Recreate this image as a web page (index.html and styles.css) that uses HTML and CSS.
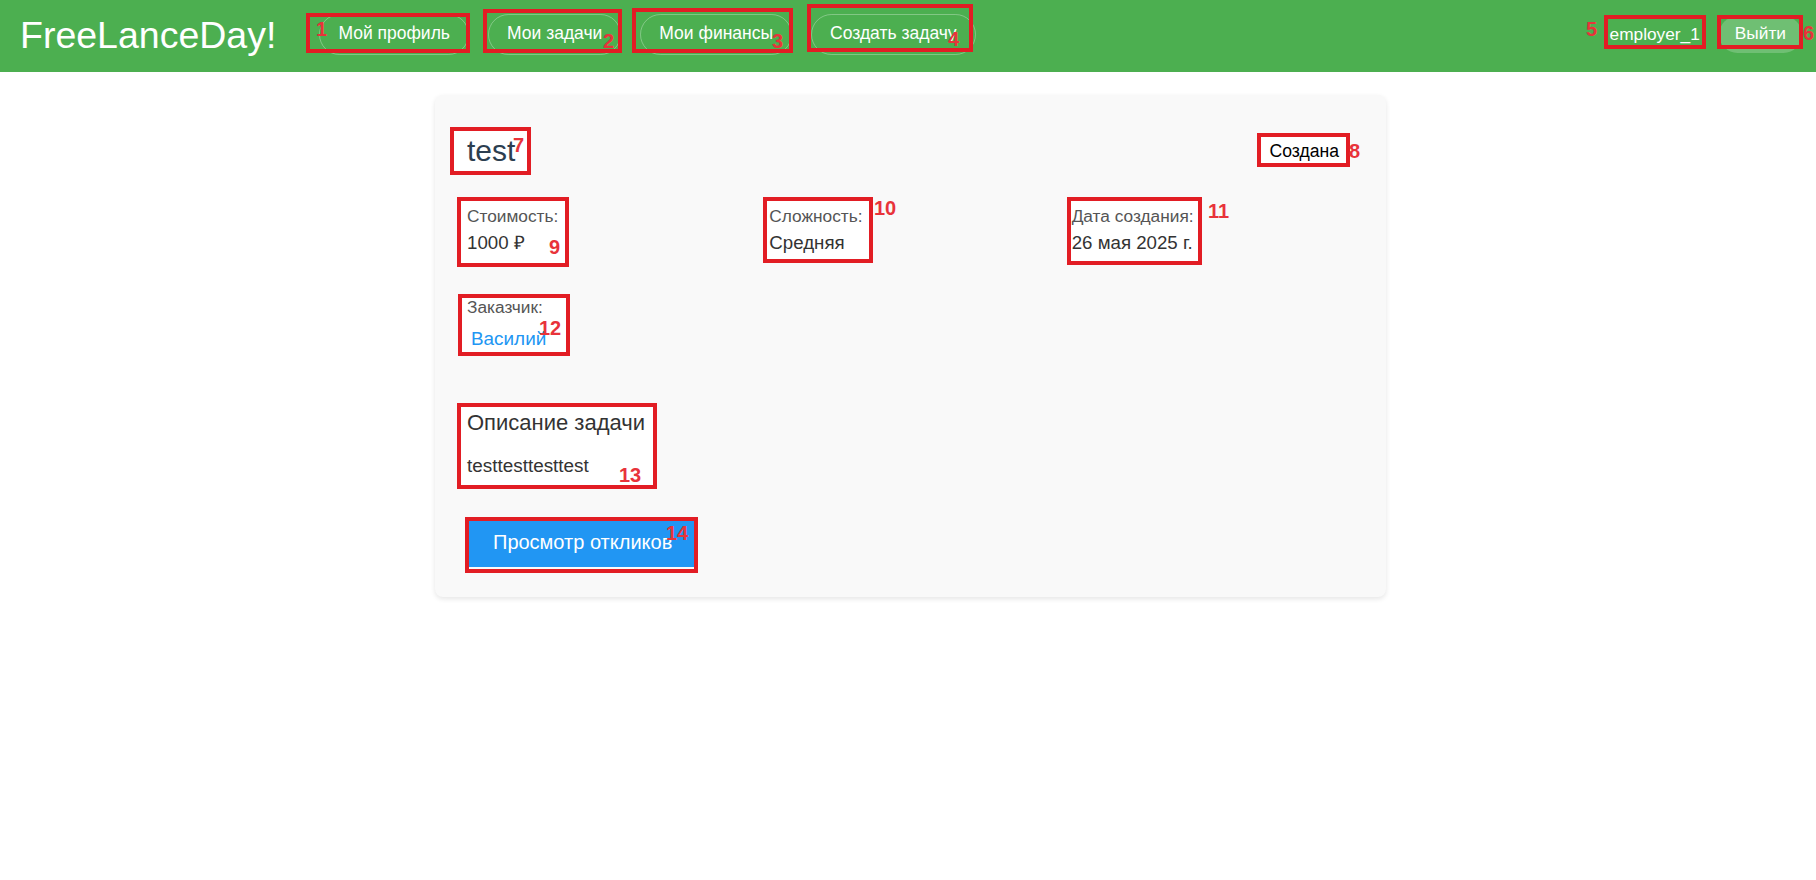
FILE: index.html
```html
<!DOCTYPE html>
<html lang="ru">
<head>
<meta charset="utf-8">
<title>FreeLanceDay! — test</title>
<link rel="stylesheet" href="styles.css">
</head>
<body>
<header class="topbar">
  <div class="logo">FreeLanceDay!</div>
  <nav class="nav">
    <a class="nav-btn">Мой профиль</a>
    <a class="nav-btn">Мои задачи</a>
    <a class="nav-btn">Мои финансы</a>
    <a class="nav-btn">Создать задачу</a>
  </nav>
  <div class="user">
    <span class="username">employer_1</span>
    <button class="logout">Выйти</button>
  </div>
</header>

<main class="page">
  <section class="card">
    <div class="card-body">
      <div class="task-head">
        <h1 class="task-title">test</h1>
        <span class="status">Создана</span>
      </div>
      <div class="details">
        <div class="detail">
          <div class="label">Стоимость:</div>
          <div class="value">1000 ₽</div>
        </div>
        <div class="detail">
          <div class="label">Сложность:</div>
          <div class="value">Средняя</div>
        </div>
        <div class="detail">
          <div class="label">Дата создания:</div>
          <div class="value">26 мая 2025 г.</div>
        </div>
        <div class="detail">
          <div class="label">Заказчик:</div>
          <a class="value link">Василий</a>
        </div>
      </div>
      <div class="desc">
        <h3 class="desc-title">Описание задачи</h3>
        <p class="desc-text">testtesttesttest</p>
      </div>
      <button class="primary">Просмотр откликов</button>
    </div>
  </section>
</main>

<div class="annotations">
  <div class="fill a7"></div>
  <div class="fill a8"></div>
  <div class="fill a9"></div>
  <div class="fill a10"></div>
  <div class="fill a11"></div>
  <div class="fill a12"></div>
  <div class="fill a13"></div>

  <div class="box a1"></div>
  <div class="box a2"></div>
  <div class="box a3"></div>
  <div class="box a4"></div>
  <div class="box a5"></div>
  <div class="box a6"></div>
  <div class="box a7"></div>
  <div class="box a8"></div>
  <div class="box a9"></div>
  <div class="box a10"></div>
  <div class="box a11"></div>
  <div class="box a12"></div>
  <div class="box a13"></div>
  <div class="box a14"></div>

  <span class="num n1">1</span>
  <span class="num n2">2</span>
  <span class="num n3">3</span>
  <span class="num n4">4</span>
  <span class="num n5">5</span>
  <span class="num n6">6</span>
  <span class="num n7">7</span>
  <span class="num n8">8</span>
  <span class="num n9">9</span>
  <span class="num n10">10</span>
  <span class="num n11">11</span>
  <span class="num n12">12</span>
  <span class="num n13">13</span>
  <span class="num n14">14</span>
</div>
</body>
</html>
```

FILE: styles.css
```css
* { box-sizing: border-box; }

html, body {
  margin: 0;
  padding: 0;
  background: #ffffff;
}

body {
  font-family: "Liberation Sans", Arial, sans-serif;
  color: #333;
  position: relative;
  min-height: 880px;
}

/* ---------- top bar ---------- */
.topbar {
  height: 72px;
  background: #4caf50;
  display: flex;
  align-items: center;
  padding: 0 14px 0 20px;
  color: #fff;
}

.logo {
  font-size: 37.5px;
  line-height: 1.15;
  margin-right: 43px;
}

.nav {
  display: flex;
  gap: 19px;
  margin-bottom: 3px;
}

.nav-btn {
  display: inline-block;
  font-size: 17.5px;
  line-height: 20px;
  padding: 8px 18px 11px;
  border: 1px solid rgba(255, 255, 255, 0.3);
  border-radius: 21px;
  color: #fff;
  text-decoration: none;
  white-space: nowrap;
}

.user {
  margin-left: auto;
  display: flex;
  align-items: center;
  gap: 19px;
  margin-bottom: 3px;
}

.username {
  font-size: 17.3px;
  line-height: 20px;
  margin-bottom: 2px;
}

.logout {
  font-family: inherit;
  font-size: 17.3px;
  line-height: 20px;
  padding: 7px 16px 10px;
  border: 0;
  border-radius: 19px;
  background: rgba(255, 255, 255, 0.2);
  color: #fff;
}

/* ---------- card ---------- */
.page {
  padding: 23px 0 0 5px;
}

.card {
  width: 951px;
  margin: 0 auto;
  background: #f9f9f9;
  border-radius: 8px;
  box-shadow: 0 2px 5px rgba(0, 0, 0, 0.1);
  padding: 38.5px 32px 30px 32px;
}

.card-body {
  position: relative;
  z-index: 1;
}

.task-head {
  display: flex;
  justify-content: space-between;
  align-items: center;
}

.task-title {
  margin: 0;
  font-size: 30px;
  line-height: 34px;
  font-weight: normal;
  color: #2c3e50;
}

.status {
  font-size: 17.6px;
  line-height: 20px;
  padding: 5px 15px;
  color: #000;
}

.details {
  margin-top: 38.5px;
  display: grid;
  grid-template-columns: repeat(3, 1fr);
  column-gap: 20px;
  row-gap: 42px;
  align-items: start;
}

.detail {
  display: flex;
  flex-direction: column;
  align-items: flex-start;
}

.label {
  font-size: 17.3px;
  line-height: 20px;
  color: #555;
  margin-bottom: 5px;
}

.value {
  font-size: 18.7px;
  line-height: 24px;
  color: #333;
}

.link {
  font-size: 18.9px;
  color: #2196f3;
  padding: 5px 4px;
  text-decoration: none;
}

.desc {
  margin-top: 54px;
}

.desc-title {
  margin: 0;
  font-size: 22px;
  line-height: 26px;
  font-weight: normal;
  color: #333;
}

.desc-text {
  margin: 18.3px 0 0;
  font-size: 18.9px;
  line-height: 24px;
  color: #333;
}

.primary {
  margin-top: 39.2px;
  font-family: inherit;
  font-size: 20px;
  line-height: 24px;
  padding: 13px 24px 13px 26px;
  border: 0;
  background: #2196f3;
  color: #fff;
  display: block;
}

/* ---------- screenshot annotations (drawn over the UI) ---------- */
.annotations {
  position: absolute;
  left: 0;
  top: 0;
  width: 0;
  height: 0;
}

.fill {
  position: absolute;
  background: #fff;
  z-index: 0;
}

.box {
  position: absolute;
  border: 4px solid #e21d24;
  z-index: 2;
}

.num {
  position: absolute;
  z-index: 2;
  font-family: "Liberation Sans", Arial, sans-serif;
  font-weight: bold;
  font-size: 20px;
  line-height: 20px;
  color: #e8333a;
}

.a1  { left: 306px;  top: 13px;  width: 164px; height: 40px; }
.a2  { left: 483px;  top: 9px;   width: 139px; height: 44px; }
.a3  { left: 632px;  top: 8px;   width: 161px; height: 45px; }
.a4  { left: 807px;  top: 4px;   width: 166px; height: 48px; }
.a5  { left: 1604px; top: 15px;  width: 102px; height: 34px; }
.a6  { left: 1717px; top: 15px;  width: 86px;  height: 34px; }
.a7  { left: 450px;  top: 127px; width: 81px;  height: 48px; }
.a8  { left: 1257px; top: 133px; width: 93px;  height: 34px; }
.a9  { left: 457px;  top: 197px; width: 112px; height: 70px; }
.a10 { left: 763px;  top: 197px; width: 110px; height: 66px; }
.a11 { left: 1067px; top: 197px; width: 135px; height: 68px; }
.a12 { left: 458px;  top: 294px; width: 112px; height: 62px; }
.a13 { left: 457px;  top: 403px; width: 200px; height: 86px; }
.a14 { left: 465px;  top: 517px; width: 233px; height: 56px; }

.n1  { left: 316px;  top: 19px; }
.n2  { left: 603px;  top: 31px; }
.n3  { left: 772px;  top: 31px; }
.n4  { left: 948px;  top: 29px; }
.n5  { left: 1586px; top: 19px; }
.n6  { left: 1803px; top: 23px; }
.n7  { left: 513px;  top: 135px; }
.n8  { left: 1349px; top: 141px; }
.n9  { left: 549px;  top: 237px; }
.n10 { left: 874px;  top: 198px; }
.n11 { left: 1208px; top: 201px; }
.n12 { left: 539px;  top: 318px; }
.n13 { left: 619px;  top: 465px; }
.n14 { left: 666px;  top: 523px; }
```
